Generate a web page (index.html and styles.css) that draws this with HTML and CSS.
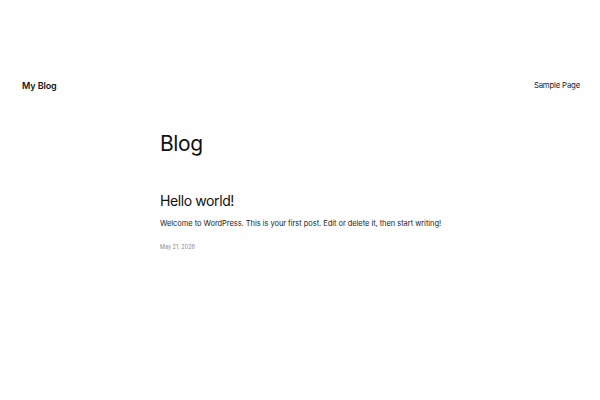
FILE: index.html
```html
<!DOCTYPE html>
<html lang="en">
<head>
<meta charset="utf-8">
<title>My Blog</title>
<link rel="stylesheet" href="styles.css">
</head>
<body>
<header class="site-header">
  <a class="site-title" href="#">My Blog</a>
  <nav class="site-nav"><a href="#">Sample Page</a></nav>
</header>
<main class="content">
  <h1 class="page-title">Blog</h1>
  <article class="post">
    <h2 class="post-title"><a href="#">Hello world!</a></h2>
    <p class="post-excerpt">Welcome to WordPress. This is your first post. Edit or delete it, then start writing!</p>
    <div class="post-date">May 21, 2026</div>
  </article>
</main>
</body>
</html>
```
FILE: styles.css
```css
* { box-sizing: border-box; }
html, body { margin: 0; padding: 0; background: #fff; }
body {
  font-family: Inter, "Noto Sans", sans-serif;
  color: #111;
  width: 600px;
  height: 400px;
  overflow: hidden;
}
a { color: inherit; text-decoration: none; }
.site-header {
  display: flex;
  justify-content: space-between;
  align-items: center;
  padding: 78px 20px 0 22px;
  height: 92px;
}
.site-title {
  font-size: 9px;
  font-weight: 600;
  letter-spacing: -0.1px;
}
.site-nav {
  font-size: 7.8px;
  letter-spacing: -0.2px;
  color: #222;
}
.content {
  padding: 39px 0 0 160px;
}
.page-title {
  margin: 0;
  font-size: 21px;
  font-weight: 400;
  letter-spacing: -0.4px;
  line-height: 26px;
}
.post { margin-top: 35px; }
.post-title {
  margin: 0;
  font-size: 14px;
  font-weight: 400;
  letter-spacing: -0.4px;
  line-height: 18px;
}
.post-excerpt {
  margin: 9px 0 0;
  font-size: 7.5px;
  letter-spacing: -0.05px;
  line-height: 10px;
  color: #222;
}
.post-date {
  margin-top: 15px;
  font-size: 5.5px;
  color: #888;
}
```
